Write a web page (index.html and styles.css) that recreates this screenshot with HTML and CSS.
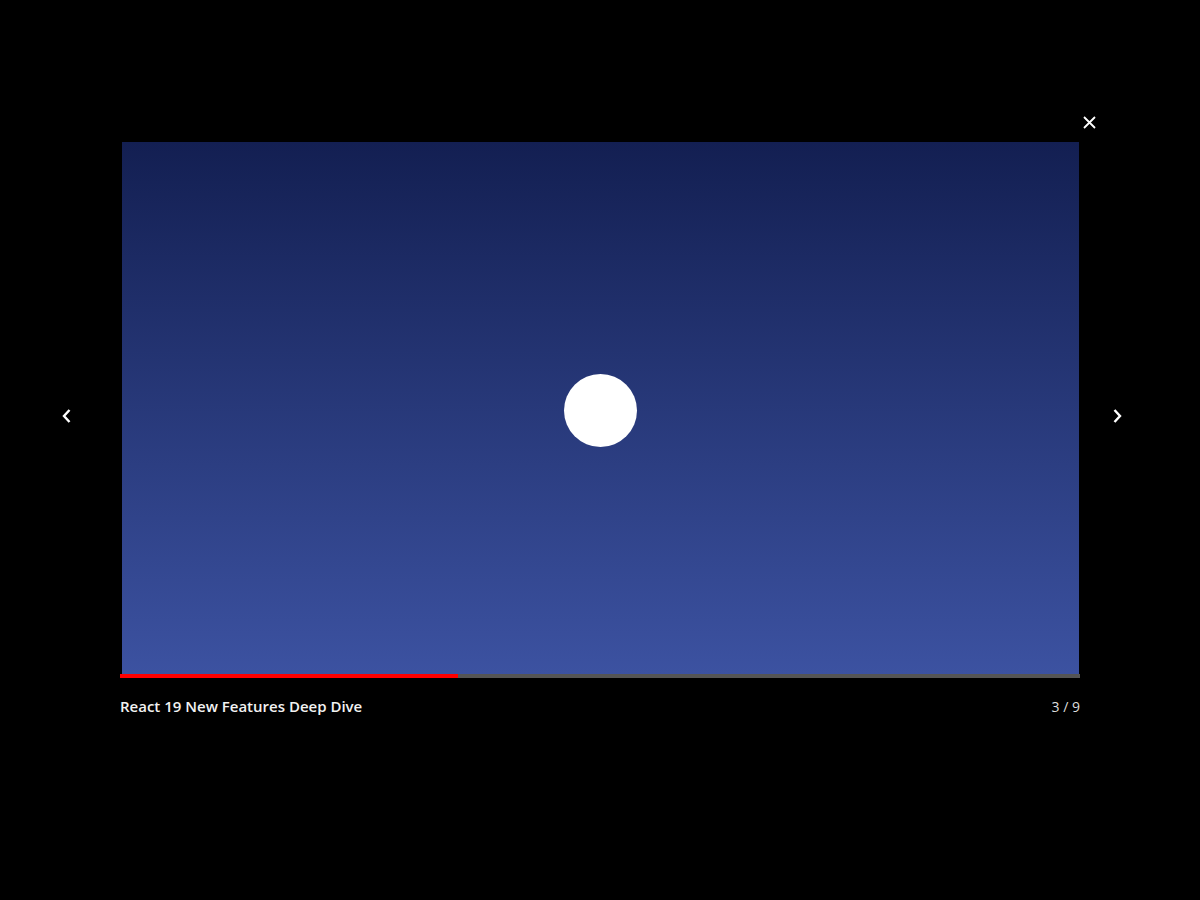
FILE: index.html
```html
<!DOCTYPE html>
<html>
<head>
<meta charset="utf-8">
<link rel="stylesheet" href="styles.css">
</head>
<body>
<div class="lightbox">
  <button class="close" aria-label="Close">
    <svg width="13" height="13" viewBox="0 0 13 13"><path d="M1 1 L12 12 M12 1 L1 12" stroke="#fff" stroke-width="1.8" fill="none"/></svg>
  </button>
  <button class="nav prev" aria-label="Previous">
    <svg width="12" height="16" viewBox="0 0 12 16"><path d="M9.5 2 L4 8 L9.5 14" stroke="#fff" stroke-width="2.4" fill="none"/></svg>
  </button>
  <button class="nav next" aria-label="Next">
    <svg width="12" height="16" viewBox="0 0 12 16"><path d="M2.5 2 L8 8 L2.5 14" stroke="#fff" stroke-width="2.4" fill="none"/></svg>
  </button>
  <div class="stage">
    <div class="media">
      <div class="dot"></div>
    </div>
    <div class="progress"><div class="fill" style="width:35.2%"></div></div>
    <div class="caption">
      <span class="title">React 19 New Features Deep Dive</span>
      <span class="count">3 / 9</span>
    </div>
  </div>
</div>
</body>
</html>
```
FILE: styles.css
```css
html, body {
  margin: 0;
  padding: 0;
  background: #000;
  width: 1200px;
  height: 900px;
  overflow: hidden;
  font-family: "Open Sans", "Noto Sans", sans-serif;
}
.lightbox {
  position: relative;
  width: 1200px;
  height: 900px;
  display: flex;
  justify-content: center;
  padding-top: 142px;
  box-sizing: border-box;
}
button {
  background: none;
  border: 0;
  padding: 0;
  cursor: pointer;
  display: flex;
  align-items: center;
  justify-content: center;
}
.close {
  position: absolute;
  left: 1079px;
  top: 112px;
  width: 21px;
  height: 21px;
}
.nav {
  position: absolute;
  top: 404px;
  width: 24px;
  height: 24px;
}
.prev { left: 54px; }
.next { left: 1106px; }
.stage {
  width: 960px;
  display: flex;
  flex-direction: column;
}
.media {
  margin: 0 1px 0 2px;
  height: 532px;
  background: linear-gradient(to bottom, #131f52 0%, #3c52a1 100%);
  display: flex;
  align-items: center;
  justify-content: center;
}
.dot {
  width: 73px;
  height: 73px;
  border-radius: 50%;
  background: #fff;
  margin-left: 0;
  margin-top: 4px;
}
.progress {
  height: 4px;
  background: #555;
}
.fill {
  height: 100%;
  background: #ff0000;
}
.caption {
  display: flex;
  justify-content: space-between;
  align-items: baseline;
  margin-top: 18px;
  color: #fff;
}
.title {
  font-size: 15px;
  font-weight: 600;
  color: #f2f2f2;
}
.count {
  font-size: 14px;
  color: #ddd;
}
```
